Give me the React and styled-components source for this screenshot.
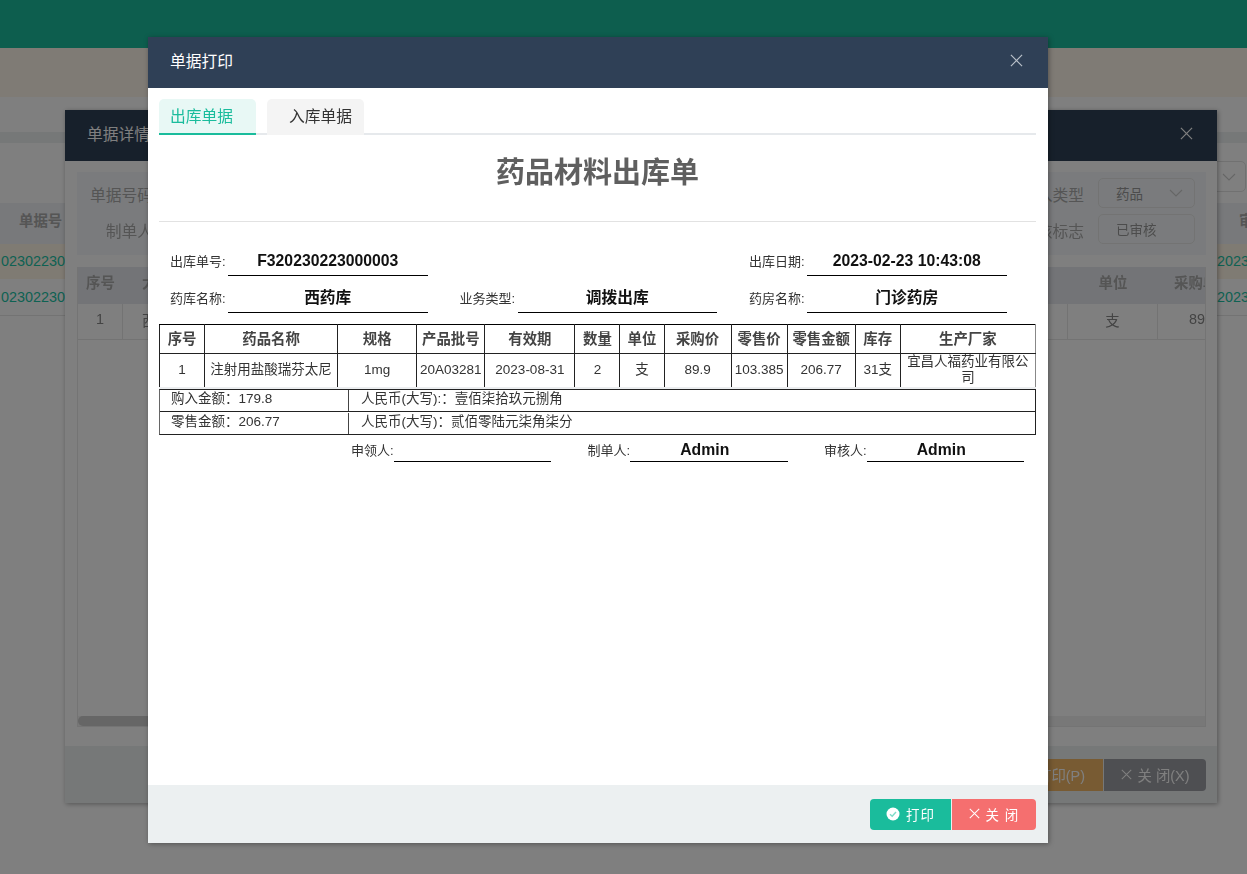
// App.jsx
import React from 'react';
import styled, { createGlobalStyle } from 'styled-components';

const GlobalStyle = createGlobalStyle`
  html, body {
    margin: 0;
    padding: 0;
    height: 100%;
    background: #fff;
    overflow: hidden;
    font-family: "Liberation Sans", "Noto Sans CJK SC", sans-serif;
  }
  * { box-sizing: border-box; }
`;

/* page behind both dialogs */
const Page = styled.div`
  height: 874px;
  overflow: hidden;
  background: #fff;
`;
const TopBar = styled.div`
  height: 48px;
  background: #1abc9c;
`;
const Banner = styled.div`
  height: 49px;
  background: #fff6ea;
`;
const Strip = styled.div`
  height: 35px;
  background: #fff;
`;
const Band = styled.div`
  height: 11px;
  background: #ecf0f1;
`;
const Toolbar = styled.div`
  height: 60px;
  padding: 18px 1px 0 0;
  display: flex;
  justify-content: flex-end;
  align-items: flex-start;
`;
const ToolSelect = styled.div`
  width: 100px;
  height: 31px;
  border: 1px solid #e2e2e2;
  border-radius: 5px;
  display: flex;
  align-items: center;
  justify-content: flex-end;
  padding-right: 9px;
  color: #bbb;
`;
const PageRow = styled.div`
  display: flex;
  justify-content: space-between;
  height: ${p => p.$height}px;
  align-items: center;
  background: ${p => p.$bg || '#fff'};
  border-bottom: 1px solid ${p => p.$line || 'transparent'};
  overflow: hidden;
  white-space: nowrap;
`;
const PageHeadCell = styled.div`
  font-size: 14.4px;
  font-weight: bold;
  color: #aaa;
  padding-left: ${p => p.$left || 0}px;
  padding-bottom: 7px;
  width: ${p => p.$width || 'auto'};
  overflow: hidden;
`;
const PageCode = styled.div`
  font-size: 14.4px;
  color: #1cc4a6;
  padding-left: 1px;
  width: ${p => p.$width || '65px'};
  overflow: hidden;
`;

/* dialogs */
const Mask = styled.div`
  position: fixed;
  inset: 0;
  background: rgba(0, 0, 0, 0.5);
`;
const Dialog = styled.div`
  position: fixed;
  left: ${p => p.$left}px;
  top: ${p => p.$top}px;
  width: ${p => p.$width}px;
  height: ${p => p.$height}px;
  background: #fff;
  display: flex;
  flex-direction: column;
  box-shadow: 1px 1px 5px rgba(0, 0, 0, 0.35);
`;
const DialogHeader = styled.div`
  height: 51px;
  flex: none;
  background: #2f4056;
  color: #fff;
  font-size: 15.75px;
  display: flex;
  align-items: center;
  justify-content: space-between;
  padding: 0 ${p => p.$closeRight}px 4px 22px;
`;
const CloseIcon = styled.svg`
  width: ${p => p.$size}px;
  height: ${p => p.$size}px;
  stroke: ${p => p.$color || '#b9c0c9'};
  stroke-width: 1.3;
  fill: none;
  flex: none;
`;
const DialogFooter = styled.div`
  flex: none;
  height: ${p => p.$height}px;
  background: #ecf0f1;
  display: flex;
  justify-content: flex-end;
  align-items: flex-start;
  padding: ${p => p.$top}px ${p => p.$right}px 0 0;
`;
const FootButton = styled.div`
  height: ${p => p.$height}px;
  width: ${p => p.$width}px;
  background: ${p => p.$bg};
  color: #fff;
  font-size: ${p => p.$font || 13.5}px;
  letter-spacing: ${p => p.$spacing ?? 1}px;
  display: flex;
  align-items: center;
  justify-content: center;
  gap: 6px;
  padding-bottom: 2px;
  white-space: nowrap;
  margin-left: ${p => (p.$joined ? '1px' : 0)};
  border-radius: ${p => p.$radius || '0'};
`;
const DialogTitle = styled.span`
  color: #fff;
`;

/* detail dialog (behind) */
const DetailBody = styled.div`
  flex: 1;
  padding: 11px 11px 19px 12px;
  display: flex;
  flex-direction: column;
  gap: 12px;
  min-height: 0;
`;
const FormPanel = styled.div`
  height: 83px;
  flex: none;
  background: #f4f7fa;
  padding-top: 6px;
  display: flex;
  flex-direction: column;
  gap: 6px;
`;
const FormRow = styled.div`
  height: 30px;
  display: flex;
  justify-content: space-between;
  align-items: center;
`;
const FormLabel = styled.div`
  width: ${p => p.$width}px;
  text-align: right;
  font-size: 15.75px;
  color: #aaa;
  padding-top: 3px;
  white-space: nowrap;
`;
const RightGroup = styled.div`
  display: flex;
  align-items: center;
  gap: 14px;
  padding-right: 11px;
`;
const FormBox = styled.div`
  width: 97px;
  height: 30px;
  border: 1px solid #e6e6e6;
  border-radius: 5px;
  padding: 0 11px 0 17px;
  font-size: 13.5px;
  color: #999;
  display: flex;
  align-items: center;
  justify-content: space-between;
`;
const InnerTable = styled.div`
  flex: 1;
  min-height: 0;
  border: 1px solid #e8e8e8;
  border-top: 0;
  display: flex;
  flex-direction: column;
`;
const InnerRow = styled.div`
  display: grid;
  grid-template-columns: 45px 1fr 90px 47px;
  height: ${p => (p.$head ? 37 : 36)}px;
  flex: none;
  background: ${p => (p.$head ? '#e6e9ee' : '#fff')};
  border-bottom: ${p => (p.$head ? 'none' : '1px solid #e6e6e6')};
`;
const InnerCell = styled.div`
  display: flex;
  align-items: center;
  justify-content: ${p => p.$align || 'center'};
  padding-left: ${p => p.$pad || 0}px;
  padding-bottom: ${p => (p.$head ? 8 : 5)}px;
  font-size: 14.4px;
  font-weight: ${p => (p.$head ? 'bold' : 'normal')};
  color: ${p => (p.$head ? '#aaa' : '#888')};
  border-right: ${p => (p.$line ? '1px solid #e6e6e6' : 'none')};
  overflow: hidden;
  white-space: nowrap;
`;
const InnerSpace = styled.div`
  flex: 1;
`;
const ScrollTrack = styled.div`
  height: 10px;
  flex: none;
  background: #f0f0f0;
`;
const ScrollThumb = styled.div`
  width: 400px;
  height: 10px;
  background: #ccc;
  border-radius: 5px;
`;

/* print dialog */
const PrintBody = styled.div`
  flex: 1;
  min-height: 0;
  padding: 11px 12px 0 11px;
`;
const Tabs = styled.div`
  display: flex;
  gap: 11px;
  height: 36px;
  border-bottom: 2px solid #e6e9ec;
`;
const Tab = styled.div`
  width: 97px;
  height: 36px;
  border-radius: 5px 5px 0 0;
  background: ${p => (p.$active ? '#e8f8f5' : '#f4f4f4')};
  color: ${p => (p.$active ? '#1abc9c' : '#333')};
  border-bottom: ${p => (p.$active ? '2px solid #1abc9c' : 'none')};
  font-size: 15.75px;
  line-height: 35px;
  padding-left: ${p => (p.$active ? 11 : 22)}px;
`;
const DocTitle = styled.h1`
  margin: 0;
  height: 87px;
  padding-top: 17px;
  text-align: center;
  font-size: 29px;
  line-height: 42px;
  font-weight: bold;
  color: #5f5f5f;
  border-bottom: 1px solid #e2e2e2;
`;
const InfoGrid = styled.div`
  margin-top: 17px;
  padding-left: 11px;
  display: grid;
  grid-template-columns: repeat(3, 289.5px);
  grid-auto-rows: 37px;
`;
const Field = styled.div`
  display: flex;
  align-items: flex-end;
`;
const FieldLabel = styled.div`
  width: 58px;
  flex: none;
  font-size: 13px;
  line-height: 28px;
  color: #333;
  white-space: nowrap;
`;
const FieldValue = styled.div`
  width: 199.5px;
  height: 31px;
  border-bottom: 1px solid #000;
  text-align: center;
  font-size: 15.75px;
  line-height: 31px;
  font-weight: bold;
  color: #111;
`;
const DocTable = styled.table`
  margin-top: 11px;
  width: 877px;
  table-layout: fixed;
  border-collapse: collapse;
  border-top: 1px solid #000;
  border-left: 1px solid #222;
  border-right: 1px solid #888;
  color: #222;
`;
const HeadCell = styled.th`
  height: 29px;
  padding: 0 0 4px;
  font-size: 14.4px;
  color: #444;
  font-weight: bold;
  border-right: 1px solid #222;
  border-bottom: 1px solid #222;
  &:last-child { border-right: 0; }
`;
const BodyCell = styled.td`
  height: 33px;
  padding: 0 0 1px;
  text-align: center;
  font-size: 13.5px;
  line-height: 16px;
  color: #333;
  border-right: 1px solid #222;
  overflow: hidden;
  white-space: ${p => (p.$wrap ? 'normal' : 'nowrap')};
  &:last-child { border-right: 0; }
`;
const TableGap = styled.div`
  height: 2px;
  width: 877px;
  background: #eceef0;
`;
const Summary = styled.div`
  width: 877px;
  border: 1px solid #222;
  border-left-color: #666;
`;
const SummaryRow = styled.div`
  height: ${p => p.$height}px;
  display: flex;
  align-items: center;
  font-size: 13.5px;
  color: #333;
  border-bottom: ${p => (p.$line ? '1px solid #222' : 'none')};
`;
const SummaryCell = styled.div`
  height: 21px;
  line-height: 18px;
  padding-left: ${p => p.$pad}px;
  width: ${p => p.$width || 'auto'};
  border-right: ${p => (p.$line ? '1px solid #444' : 'none')};
  white-space: nowrap;
`;
const SignGrid = styled.div`
  margin-top: 0;
  padding-right: 12px;
  display: grid;
  grid-template-columns: repeat(3, 236.5px);
  justify-content: end;
`;
const SignField = styled.div`
  height: 27px;
  display: flex;
  justify-content: flex-end;
  align-items: flex-end;
`;
const SignLabel = styled.div`
  font-size: 13px;
  line-height: 23px;
  color: #333;
  white-space: nowrap;
`;
const SignValue = styled(FieldValue)`
  width: 157.5px;
  height: 27px;
  padding-right: 8px;
  line-height: 29px;
`;

const XIcon = ({ size, color }) => (
  <CloseIcon $size={size} $color={color} viewBox="0 0 14 14">
    <path d="M1 1 L13 13 M13 1 L1 13" />
  </CloseIcon>
);

const Chevron = () => (
  <svg width="14" height="8" viewBox="0 0 14 8" fill="none" stroke="#ccc" strokeWidth="1.1">
    <path d="M1 1 L7 7 L13 1" />
  </svg>
);

const CheckBadge = () => (
  <svg width="14" height="14" viewBox="0 0 14 14">
    <circle cx="7" cy="7" r="6.5" fill="#fff" />
    <path d="M4 7.2 L6.2 9.3 L10 5" fill="none" stroke="#7fdcc8" strokeWidth="1.4" />
  </svg>
);

const columns = [
  { title: '序号', width: 45, value: '1' },
  { title: '药品名称', width: 133, value: '注射用盐酸瑞芬太尼' },
  { title: '规格', width: 79, value: '1mg' },
  { title: '产品批号', width: 68, value: '20A03281' },
  { title: '有效期', width: 90, value: '2023-08-31' },
  { title: '数量', width: 45, value: '2' },
  { title: '单位', width: 44, value: '支' },
  { title: '采购价', width: 67, value: '89.9' },
  { title: '零售价', width: 56, value: '103.385' },
  { title: '零售金额', width: 68, value: '206.77' },
  { title: '库存', width: 45, value: '31支' },
  { title: '生产厂家', width: 135, value: '宜昌人福药业有限公司', wrap: true },
];

const BackgroundPage = () => (
  <Page>
    <TopBar />
    <Banner />
    <Strip />
    <Band />
    <Toolbar>
      <ToolSelect><Chevron /></ToolSelect>
    </Toolbar>
    <PageRow $height={41} $bg="#f0f2f6">
      <PageHeadCell $left={19}>单据号</PageHeadCell>
      <PageHeadCell $width="8px">审核</PageHeadCell>
    </PageRow>
    <PageRow $height={35} $bg="#fff6e6">
      <PageCode>02302230000003</PageCode>
      <PageCode $width="31px">20230223</PageCode>
    </PageRow>
    <PageRow $height={37} $line="#e6e6e6">
      <PageCode>02302230000002</PageCode>
      <PageCode $width="31px">20230223</PageCode>
    </PageRow>
  </Page>
);

const DetailDialog = () => (
  <Dialog $left={65} $top={110} $width={1152} $height={693}>
    <DialogHeader $closeRight={24}>
      <DialogTitle>单据详情</DialogTitle>
      <XIcon size={13} color="#ffffff" />
    </DialogHeader>
    <DetailBody>
      <FormPanel>
        <FormRow>
          <FormLabel $width={76}>单据号码</FormLabel>
          <RightGroup>
            <FormLabel $width={64}>出入类型</FormLabel>
            <FormBox>药品<Chevron /></FormBox>
          </RightGroup>
        </FormRow>
        <FormRow>
          <FormLabel $width={76}>制单人</FormLabel>
          <RightGroup>
            <FormLabel $width={64}>审核标志</FormLabel>
            <FormBox>已审核</FormBox>
          </RightGroup>
        </FormRow>
      </FormPanel>
      <InnerTable>
        <InnerRow $head>
          <InnerCell $head>序号</InnerCell>
          <InnerCell $head $align="flex-start" $pad={19}>大类</InnerCell>
          <InnerCell $head>单位</InnerCell>
          <InnerCell $head $align="flex-start" $pad={16}>采购单价</InnerCell>
        </InnerRow>
        <InnerRow>
          <InnerCell $line>1</InnerCell>
          <InnerCell $line $align="flex-start" $pad={19}>西药</InnerCell>
          <InnerCell $line>支</InnerCell>
          <InnerCell $align="flex-start" $pad={31}>89.9000</InnerCell>
        </InnerRow>
        <InnerSpace />
        <ScrollTrack><ScrollThumb /></ScrollTrack>
      </InnerTable>
    </DetailBody>
    <DialogFooter $height={57} $top={13} $right={11}>
      <FootButton $bg="#f0b666" $font={14.4} $spacing={0} $width={104} $height={32} $radius="4px 0 0 4px">
        <CheckBadge />打印(P)
      </FootButton>
      <FootButton $bg="#9c9ea4" $font={14.4} $spacing={0} $width={102} $height={32} $joined $radius="0 4px 4px 0">
        <XIcon size={11} color="#ffffff" />关 闭(X)
      </FootButton>
    </DialogFooter>
  </Dialog>
);

const PrintDialog = () => (
  <Dialog $left={148} $top={37} $width={900} $height={806}>
    <DialogHeader $closeRight={25}>
      单据打印
      <XIcon size={13} />
    </DialogHeader>
    <PrintBody>
      <Tabs>
        <Tab $active>出库单据</Tab>
        <Tab>入库单据</Tab>
      </Tabs>
      <DocTitle>药品材料出库单</DocTitle>
      <InfoGrid>
        <Field>
          <FieldLabel>出库单号:</FieldLabel>
          <FieldValue>F320230223000003</FieldValue>
        </Field>
        <div />
        <Field>
          <FieldLabel>出库日期:</FieldLabel>
          <FieldValue>2023-02-23 10:43:08</FieldValue>
        </Field>
        <Field>
          <FieldLabel>药库名称:</FieldLabel>
          <FieldValue>西药库</FieldValue>
        </Field>
        <Field>
          <FieldLabel>业务类型:</FieldLabel>
          <FieldValue>调拨出库</FieldValue>
        </Field>
        <Field>
          <FieldLabel>药房名称:</FieldLabel>
          <FieldValue>门诊药房</FieldValue>
        </Field>
      </InfoGrid>
      <DocTable>
        <colgroup>
          {columns.map(c => <col key={c.title} width={c.width} />)}
        </colgroup>
        <thead>
          <tr>
            {columns.map(c => <HeadCell key={c.title}>{c.title}</HeadCell>)}
          </tr>
        </thead>
        <tbody>
          <tr>
            {columns.map(c => (
              <BodyCell key={c.title} $wrap={c.wrap}>{c.value}</BodyCell>
            ))}
          </tr>
        </tbody>
      </DocTable>
      <TableGap />
      <Summary>
        <SummaryRow $height={22} $line>
          <SummaryCell $pad={11} $width="189px" $line>购入金额：179.8</SummaryCell>
          <SummaryCell $pad={12}>人民币(大写):：壹佰柒拾玖元捌角</SummaryCell>
        </SummaryRow>
        <SummaryRow $height={22}>
          <SummaryCell $pad={11} $width="189px" $line>零售金额：206.77</SummaryCell>
          <SummaryCell $pad={12}>人民币(大写)：贰佰零陆元柒角柒分</SummaryCell>
        </SummaryRow>
      </Summary>
      <SignGrid>
        <SignField>
          <SignLabel>申领人:</SignLabel>
          <SignValue />
        </SignField>
        <SignField>
          <SignLabel>制单人:</SignLabel>
          <SignValue>Admin</SignValue>
        </SignField>
        <SignField>
          <SignLabel>审核人:</SignLabel>
          <SignValue>Admin</SignValue>
        </SignField>
      </SignGrid>
    </PrintBody>
    <DialogFooter $height={58} $top={14} $right={12}>
      <FootButton $bg="#1abc9c" $width={81} $height={31} $radius="4px 0 0 4px">
        <CheckBadge />打印
      </FootButton>
      <FootButton $bg="#f56f6f" $width={84} $height={31} $joined $radius="0 4px 4px 0">
        <XIcon size={11} color="#ffffff" />关 闭
      </FootButton>
    </DialogFooter>
  </Dialog>
);

const App = () => (
  <>
    <GlobalStyle />
    <BackgroundPage />
    <DetailDialog />
    <Mask />
    <PrintDialog />
  </>
);

export default App;
